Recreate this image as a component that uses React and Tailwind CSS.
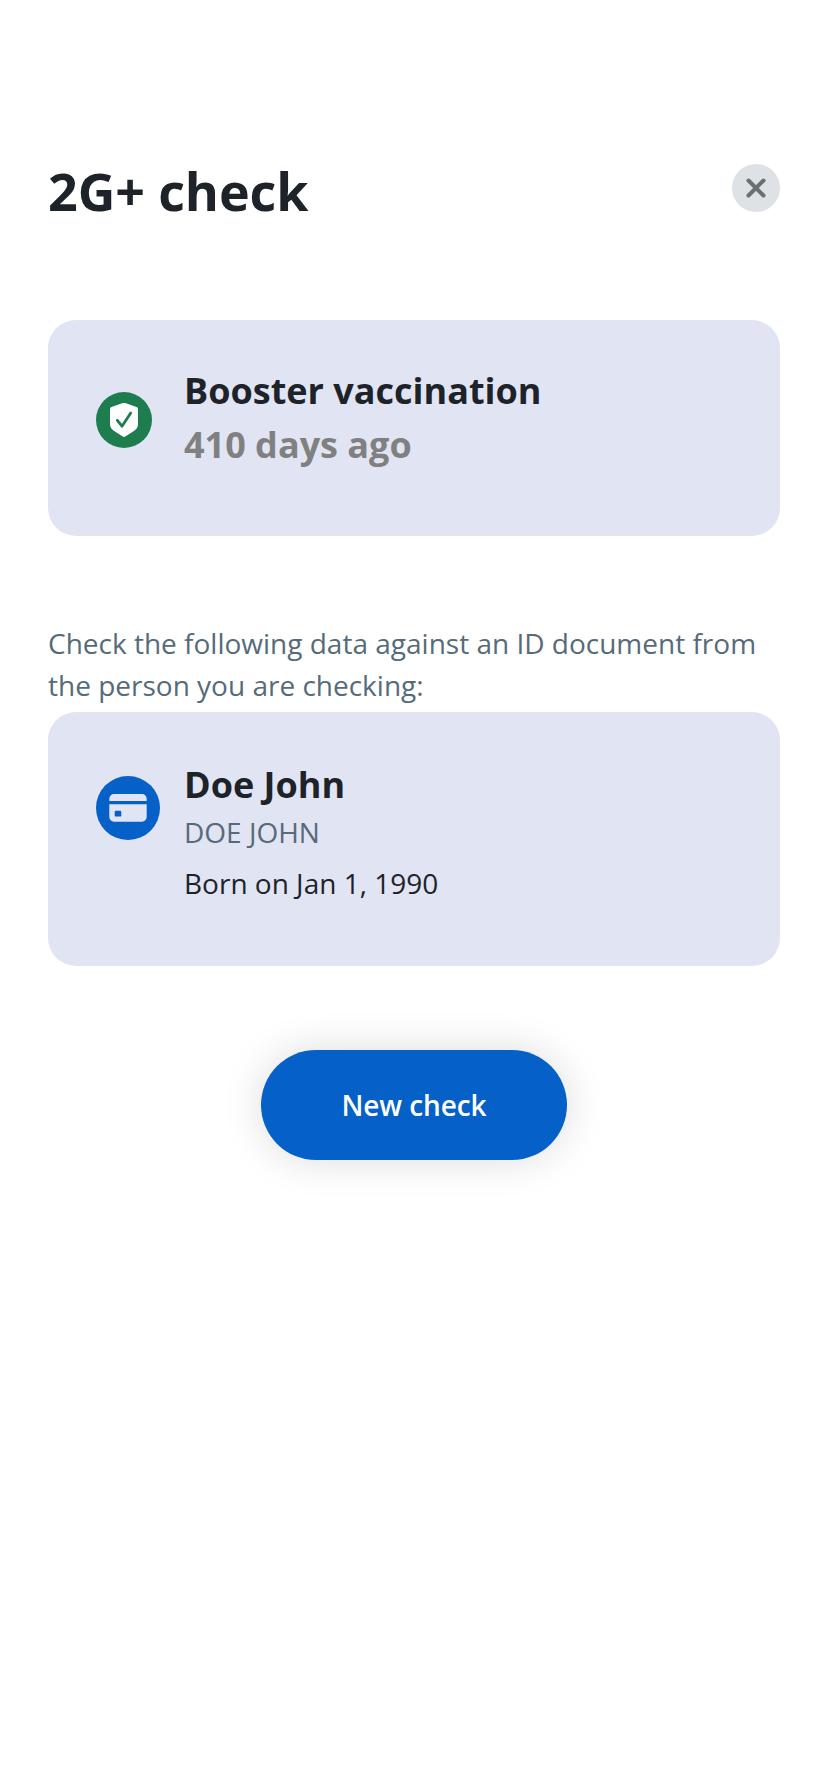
export default function App() {
  return (
    <main className="min-h-[1792px] w-[828px] bg-white px-12 pt-[164px] font-['Open_Sans',sans-serif] text-[#1d2329]">
      <header className="flex h-[156px] items-start justify-between">
        <h1 className="-mt-[9px] text-[52px] leading-[72px] font-bold tracking-[-0.1px]">2G+ check</h1>
        <button aria-label="Close" className="flex size-12 items-center justify-center rounded-full bg-[#dee2e6]">
          <svg className="size-12" viewBox="0 0 48 48" fill="none" stroke="#68716f" strokeWidth="4" strokeLinecap="round">
            <path d="M16.500 16.500 31.500 31.500M31.500 16.500 16.500 31.500" />
          </svg>
        </button>
      </header>
      <section className="flex h-[216px] rounded-[28px] bg-[#e1e4f3] pl-12">
        <svg className="mt-[72px] size-14" viewBox="0 0 56 56">
          <circle cx="28" cy="28" r="28" fill="#1e7d4f" />
          <path d="M26.800 11.100Q28 10.700 29.200 11.100L40.500 14.900Q42 15.400 42 17V32C42 35.500 40.500 37.300 37.500 39.300L29.200 44.500Q28 45.300 26.800 44.500L18.500 39.300C15.500 37.300 14 35.500 14 32V17Q14 15.400 15.500 14.900Z" fill="#fff" />
          <path d="m21.300 28.300 4.700 5.900 8.700-13.100" fill="none" stroke="#1e7d4f" strokeWidth="2.800" strokeLinecap="round" strokeLinejoin="round" />
        </svg>
        <div className="ml-8 pt-[44px] text-[36px] leading-[54px] font-bold">
          <h2>Booster vaccination</h2>
          <p className="text-[#808080]">410 days ago</p>
        </div>
      </section>
      <p className="mt-[86px] text-[28px] leading-[42px] text-[#566b7a]">
        Check the following data against an ID document from<br />the person you are checking:
      </p>
      <section className="mt-[6px] flex h-[254px] rounded-[28px] bg-[#e1e4f3] pl-12">
        <svg className="mt-16 size-16" viewBox="0 0 64 64">
          <circle cx="32" cy="32" r="32" fill="#0560c7" />
          <path d="M13.300 25v-2.300A4.700 4.700 0 0 1 18 18h28a4.700 4.700 0 0 1 4.700 4.700V25ZM13.300 28.300h37.400V41a4.700 4.700 0 0 1-4.700 4.700H18a4.700 4.700 0 0 1-4.700-4.700Z" fill="#e1e4f3" />
          <rect x="18.700" y="34.700" width="6.600" height="5.900" rx="1.200" fill="#0560c7" />
        </svg>
        <div className="ml-6 pt-[46px] text-[28px]">
          <h2 className="text-[36px] leading-[54px] font-bold">Doe John</h2>
          <p className="-mt-px leading-[42px] text-[#566b7a]">DOE JOHN</p>
          <p className="mt-[9px] leading-[42px]">Born on Jan 1, 1990</p>
        </div>
      </section>
      <div className="mt-[84px] flex justify-center">
        <button className="h-[110px] w-[306px] rounded-full bg-[#0560c7] text-[28px] font-semibold tracking-[-0.1px] text-white shadow-[0_0_40px_rgba(0,0,0,0.14)]">New check</button>
      </div>
    </main>
  );
}
